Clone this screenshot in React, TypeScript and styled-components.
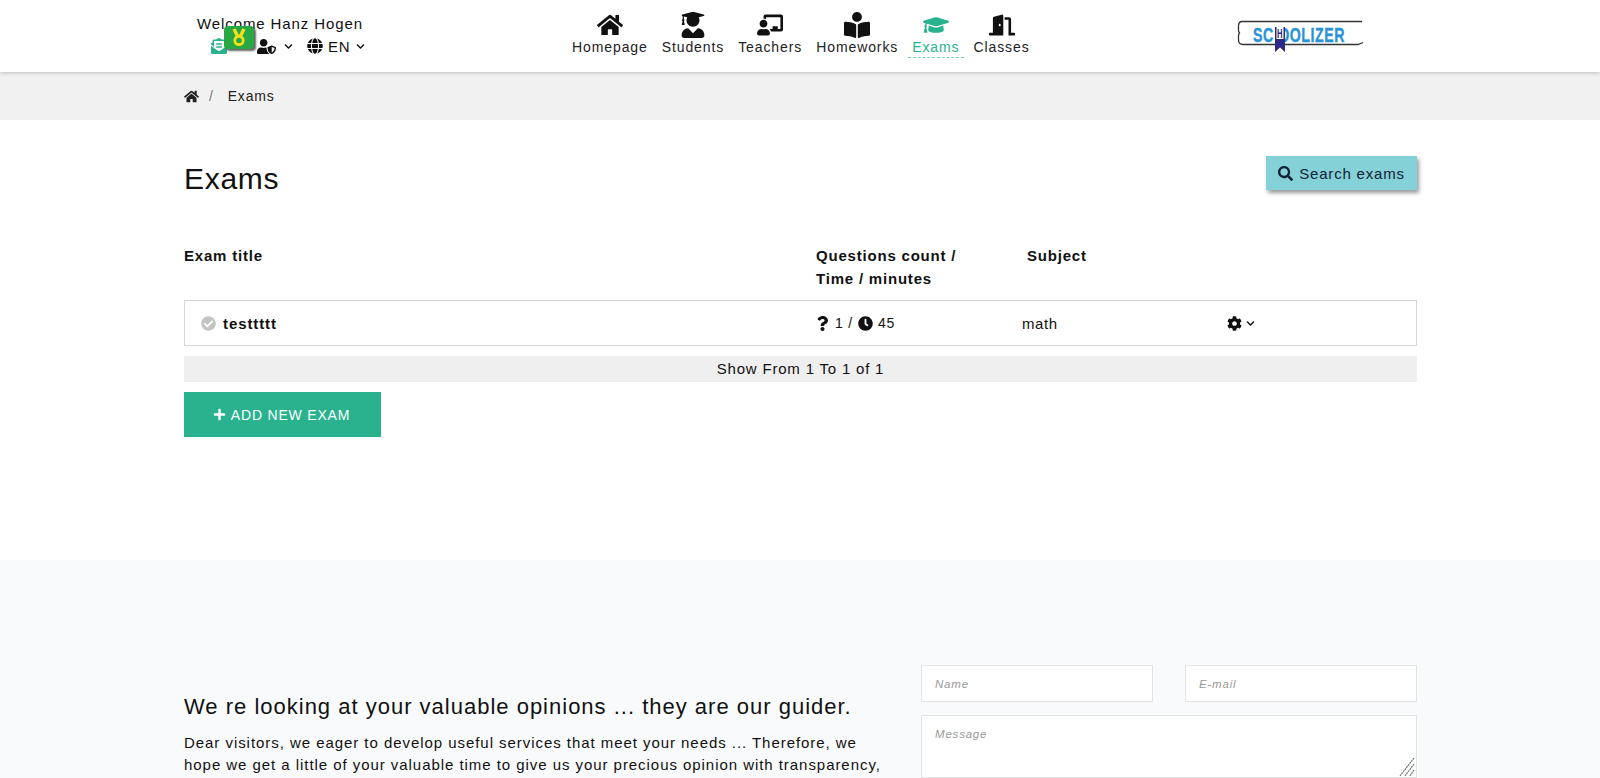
import React from "react";
import styled, { createGlobalStyle } from "styled-components";
import {
  FaHome, FaUserGraduate, FaChalkboardTeacher, FaBookReader, FaGraduationCap, FaDoorOpen,
  FaUserShield, FaGlobe, FaChevronDown, FaQuestion, FaClock, FaCog, FaSearch, FaPlus,
  FaCheckCircle, FaEnvelopeOpenText,
} from "react-icons/fa";

const Global = createGlobalStyle`
  html, body { margin: 0; padding: 0; height: 778px; overflow: hidden; background: #fff; }
  body { font-family: "Liberation Sans", Arial, sans-serif; color: #111; letter-spacing: 0.8px; }
  * { box-sizing: border-box; }
`;

const Page = styled.div`
  height: 778px;
  overflow: hidden;
  display: flex;
  flex-direction: column;
`;

const Header = styled.header`
  height: 72px;
  flex: none;
  background: #fff;
  box-shadow: 0 1px 4px rgba(0, 0, 0, 0.22);
  position: relative;
  z-index: 2;
  display: flex;
  padding-left: 197px;
`;

const UserBlock = styled.div`
  width: 371px;
  flex: none;
  padding-top: 15px;
`;

const Welcome = styled.div`
  font-size: 15px;
  line-height: 18px;
  color: #111;
  letter-spacing: 0.9px;
`;

const UserRow = styled.div`
  position: relative;
  display: flex;
  align-items: center;
  height: 18px;
  margin-top: 4px;
  padding-left: 14px;
  font-size: 15px;
`;

const MailIcon = styled(FaEnvelopeOpenText)`
  color: #2ab28f;
  font-size: 16px;
`;

const Badge = styled.span`
  position: absolute;
  left: 27px;
  top: -11px;
  width: 30px;
  height: 23px;
  border-radius: 4px;
  background: #27a844;
  box-shadow: 2px 2px 2px rgba(0, 0, 0, 0.6);
  display: flex;
  align-items: center;
  justify-content: center;
`;

const ShieldIcon = styled(FaUserShield)`
  font-size: 19px;
  margin-left: 30px;
`;

const Caret = styled(FaChevronDown)<{ $gap?: number }>`
  font-size: 9px;
  margin-left: ${(p) => p.$gap ?? 6}px;
`;

const GlobeIcon = styled(FaGlobe)`
  font-size: 16px;
  margin-left: 14px;
  margin-right: 5px;
`;

const Nav = styled.nav`
  display: flex;
  align-items: flex-start;
  gap: 6px;
  padding-top: 12px;
`;

const NavItem = styled.a<{ $active?: boolean }>`
  display: flex;
  flex-direction: column;
  align-items: center;
  height: 46px;
  padding: 0 4px;
  font-size: 14px;
  line-height: 18px;
  letter-spacing: 0.9px;
  color: ${(p) => (p.$active ? "#2ab28f" : "#222")};
  border-bottom: 1px dashed ${(p) => (p.$active ? "#7ccfb9" : "transparent")};
  svg {
    font-size: 26px;
    height: 26px;
    flex: none;
    color: ${(p) => (p.$active ? "#2ab28f" : "#111")};
  }
`;

const LogoSvg = styled.svg`
  position: absolute;
  left: 1237px;
  top: 20px;
`;

const Crumbs = styled.div`
  height: 48px;
  flex: none;
  background: #f1f1f1;
  display: flex;
  align-items: center;
  padding-left: 184px;
  font-size: 14px;
  color: #222;
`;

const CrumbSep = styled.span`
  margin: 0 14px 0 10px;
  color: #777;
`;

const Main = styled.main`
  height: 440px;
  flex: none;
  padding: 36px 183px 0 184px;
`;

const TitleRow = styled.div`
  display: flex;
  justify-content: space-between;
  align-items: flex-start;
  height: 89px;
`;

const Title = styled.h1`
  margin: 0;
  padding-top: 5px;
  font-size: 30px;
  line-height: 36px;
  font-weight: 400;
  letter-spacing: 0.7px;
`;

const SearchButton = styled.button`
  width: 151px;
  height: 34px;
  border: 0;
  background: #85d1d8;
  box-shadow: 2px 3px 4px rgba(0, 0, 0, 0.4);
  display: flex;
  align-items: center;
  justify-content: center;
  gap: 6px;
  font: inherit;
  font-size: 15px;
  letter-spacing: 0.8px;
  color: #123;
  padding: 0;
`;

const HeadGrid = styled.div`
  display: grid;
  grid-template-columns: 632px 211px 1fr;
  font-size: 15px;
  line-height: 22.5px;
  font-weight: 700;
  height: 55px;
`;

const Row = styled.div`
  display: grid;
  grid-template-columns: 616px 205px 205px 1fr;
  align-items: center;
  height: 46px;
  border: 1px solid #d6d6d6;
  padding-left: 16px;
  font-size: 14px;
`;

const RowTitle = styled.div`
  display: flex;
  align-items: center;
  gap: 7px;
  font-size: 15px;
  font-weight: 700;
  letter-spacing: 0.9px;
  svg { color: #c4c4c4; font-size: 15px; }
`;

const Counts = styled.div`
  display: flex;
  align-items: center;
  gap: 5px;
  margin-left: -2px;
  svg { font-size: 15px; }
`;

const Subject = styled.div`
  font-size: 15px;
  letter-spacing: 0.6px;
`;

const Settings = styled.div`
  display: flex;
  align-items: center;
  svg:first-child { font-size: 15px; }
`;

const Paging = styled.div`
  height: 26px;
  margin-top: 10px;
  background: #efefef;
  text-align: center;
  font-size: 15px;
  line-height: 26px;
`;

const AddButton = styled.button`
  display: flex;
  align-items: center;
  justify-content: center;
  gap: 5px;
  width: 197px;
  height: 45px;
  margin-top: 10px;
  border: 0;
  padding: 0 2px 0 0;
  background: #2ab28f;
  color: #fff;
  font: inherit;
  font-size: 14px;
  letter-spacing: 0.8px;
  svg { font-size: 13px; }
`;

const Footer = styled.footer`
  flex: 1;
  background: #f9fafb;
  display: grid;
  grid-template-columns: 737px 496px;
  padding: 105px 183px 0 184px;
`;

const Opinion = styled.div`
  padding-top: 28px;
  max-width: 705px;
`;

const OpinionTitle = styled.h2`
  margin: 0;
  font-size: 22px;
  line-height: 28px;
  font-weight: 400;
  letter-spacing: 1px;
`;

const OpinionText = styled.p`
  margin: 11px 0 0;
  font-size: 15px;
  line-height: 21.5px;
  letter-spacing: 0.95px;
`;

const Form = styled.form`
  display: grid;
  grid-template-columns: 232px 232px;
  justify-content: space-between;
  align-content: start;
  row-gap: 13px;
`;

const Field = styled.input`
  height: 37px;
  border: 1px solid #e1e4e3;
  background: #fff;
  padding: 0 13px;
  font: inherit;
  font-size: 11.500px;
  font-style: italic;
  letter-spacing: 0.8px;
  outline: 0;
  &::placeholder { color: #999; opacity: 1; }
`;

const MessageBox = styled.div`
  grid-column: 1 / -1;
  position: relative;
  height: 63px;
`;

const Message = styled.textarea`
  display: block;
  width: 100%;
  height: 100%;
  border: 1px solid #e1e4e3;
  background: #fff;
  padding: 12px 13px;
  font: inherit;
  font-size: 11.500px;
  font-style: italic;
  letter-spacing: 0.8px;
  outline: 0;
  resize: none;
  &::placeholder { color: #999; opacity: 1; }
`;

const Grip = styled.svg`
  position: absolute;
  right: 1px;
  bottom: 1px;
`;

const navItems = [
  { label: "Homepage", Icon: FaHome },
  { label: "Students", Icon: FaUserGraduate },
  { label: "Teachers", Icon: FaChalkboardTeacher },
  { label: "Homeworks", Icon: FaBookReader },
  { label: "Exams", Icon: FaGraduationCap, active: true },
  { label: "Classes", Icon: FaDoorOpen },
];

const Medal = () => (
  <svg width="16" height="19" viewBox="0 0 16 19" fill="none">
    <path d="M3 1L7 9M13 1L9 9" stroke="#f2e01c" strokeWidth="3.400" />
    <circle cx="8" cy="12.500" r="4.200" stroke="#f2e01c" strokeWidth="2.800" />
  </svg>
);

const Logo = () => (
  <LogoSvg width="128" height="34" viewBox="0 0 128 34">
    <path d="M125 1.500H5Q1.500 1.500 1.500 6V10Q1.500 12 2.500 13Q1.500 14 1.500 16V20Q1.500 24.500 6 24.500H121L126 22.500" fill="#fff" stroke="#333" strokeWidth="1.300" />
    <text x="16" y="22" fontFamily="Liberation Sans" fontWeight="700" fontSize="21" fill="#2a93d8" stroke="#2a93d8" strokeWidth="0.400" textLength="92" lengthAdjust="spacingAndGlyphs">SC OOLIZER</text>
    <path d="M38 7H48V32L43 27.500L38 32Z" fill="#2c2a86" />
    <rect x="39.500" y="7" width="7" height="12" fill="#fff" />
    <text x="40" y="17.500" fontFamily="Liberation Sans" fontWeight="700" fontSize="12" fill="#2c2a86" textLength="6" lengthAdjust="spacingAndGlyphs">H</text>
  </LogoSvg>
);

export default function App() {
  return (
    <Page>
      <Global />
      <Header>
        <UserBlock>
          <Welcome>Welcome Hanz Hogen</Welcome>
          <UserRow>
            <MailIcon />
            <Badge><Medal /></Badge>
            <ShieldIcon />
            <Caret $gap={8} />
            <GlobeIcon />
            EN
            <Caret />
          </UserRow>
        </UserBlock>
        <Nav>
          {navItems.map(({ label, Icon, active }) => (
            <NavItem key={label} $active={active}>
              <Icon />
              {label}
            </NavItem>
          ))}
        </Nav>
        <Logo />
      </Header>
      <Crumbs>
        <FaHome size={15} />
        <CrumbSep>/</CrumbSep>
        Exams
      </Crumbs>
      <Main>
        <TitleRow>
          <Title>Exams</Title>
          <SearchButton><FaSearch size={15} /> Search exams</SearchButton>
        </TitleRow>
        <HeadGrid>
          <div>Exam title</div>
          <div>Questions count /<br />Time / minutes</div>
          <div>Subject</div>
        </HeadGrid>
        <Row>
          <RowTitle><FaCheckCircle /> testtttt</RowTitle>
          <Counts><FaQuestion /> 1 / <FaClock /> 45</Counts>
          <Subject>math</Subject>
          <Settings><FaCog /><Caret $gap={4} /></Settings>
        </Row>
        <Paging>Show From 1 To 1 of 1</Paging>
        <AddButton><FaPlus /> ADD NEW EXAM</AddButton>
      </Main>
      <Footer>
        <Opinion>
          <OpinionTitle>We re looking at your valuable opinions ... they are our guider.</OpinionTitle>
          <OpinionText>
            Dear visitors, we eager to develop useful services that meet your needs ... Therefore, we hope we get a little of your valuable time to give us your precious opinion with transparency,
          </OpinionText>
        </Opinion>
        <Form>
          <Field placeholder="Name" />
          <Field placeholder="E-mail" />
          <MessageBox>
            <Message placeholder="Message" />
            <Grip width="17" height="20" viewBox="0 0 17 20" stroke="#777" strokeWidth="1.200" strokeDasharray="2 0.600">
              <path d="M1 19L15 1M6 19L15 7M11 19L15 13" />
            </Grip>
          </MessageBox>
        </Form>
      </Footer>
    </Page>
  );
}
